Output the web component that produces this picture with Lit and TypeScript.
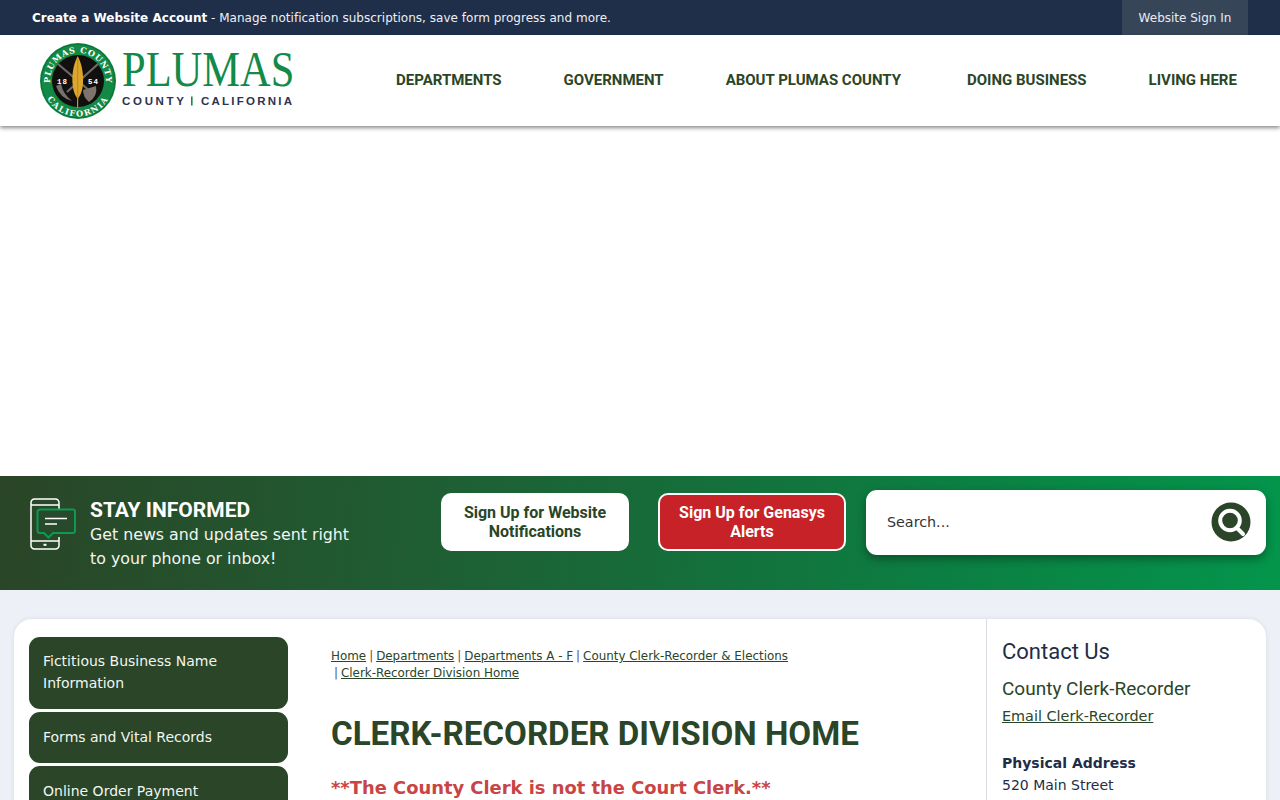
import { LitElement, html, css, svg } from "lit";
import { customElement } from "lit/decorators.js";

const seal = svg`<svg class="seal" viewBox="0 0 78 78" width="78" height="78" aria-label="Plumas County seal">
  <defs>
    <path id="arcTop" d="M39 67 A28 28 0 1 1 39.01 67"/>
    <path id="arcBot" d="M39 3.500 A35.500 35.500 0 1 0 39.01 3.500"/>
  </defs>
  <circle cx="39" cy="39" r="38" fill="#128a45"/>
  <circle cx="39" cy="39" r="36.800" fill="none" stroke="#0a5f30" stroke-width=".6"/>
  <circle cx="39" cy="39" r="26" fill="#12100f"/>
  <text class="sealt"><textPath href="#arcTop" startOffset="50%" text-anchor="middle">PLUMAS COUNTY</textPath></text>
  <text class="sealt wide"><textPath href="#arcBot" startOffset="50%" text-anchor="middle">CALIFORNIA</textPath></text>
  <path d="M19 22 L52 50 M59 22 L28 50" stroke="#6d6a66" stroke-width="2.200"/>
  <path d="M17 44 Q21 56 33 59 Q24 52 22 42 Z" fill="#77716b"/>
  <path d="M44 48 L57 44 Q59 54 50 60 Q44 55 44 48 Z" fill="#7f746c"/>
  <path d="M38.600 66 L38.600 56" stroke="#b9973c" stroke-width="1.200"/>
  <path d="M38.700 14 C43 22 45 33 43.800 44 C43 50 41 54 38.700 57 C36.500 54 34.500 50 33.800 44 C32.500 33 34.500 22 38.700 14 Z" fill="#dca52c"/>
  <path d="M38.700 17 L38.700 57" stroke="#a97c1f" stroke-width=".7"/>
  <text x="18" y="41.500" class="yr">18</text>
  <text x="49" y="41.500" class="yr">54</text>
</svg>`;

const wordmark = svg`<svg class="word" viewBox="0 0 210 58" width="210" height="58">
  <text x="0" y="36" class="pl" transform="scale(.85 1)">PLUMAS</text>
  <text x="0" y="55" class="cc" textLength="62" lengthAdjust="spacing">COUNTY</text>
  <rect x="69" y="46.500" width="1.600" height="9" fill="#128a45"/>
  <text x="79" y="55" class="cc" textLength="91" lengthAdjust="spacing">CALIFORNIA</text>
</svg>`;

const phone = svg`<svg viewBox="0 0 46 52" width="46" height="52" fill="none">
  <path d="M23 1H4.500A3.500 3.500 0 0 0 1 4.500V47.500A3.500 3.500 0 0 0 4.500 51H25.500A3.500 3.500 0 0 0 29 47.500V39M1 7H29V11M1 43H29M29 7V4.500A3.500 3.500 0 0 0 25.500 1H22" stroke="#fff" stroke-width="1.500"/>
  <rect x="13.500" y="45.800" width="3" height="2" fill="#fff"/>
  <path d="M10 11.500H43A2 2 0 0 1 45 13.500V33A2 2 0 0 1 43 35H23L18.500 39.500L14 35H10A2.500 2.500 0 0 1 7.500 32.500V14A2.500 2.500 0 0 1 10 11.500Z" fill="#27492c" stroke="#0d9a4e" stroke-width="2"/>
  <path d="M15 20.500H37M15 26H27" stroke="#fff" stroke-width="1.700"/>
</svg>`;

const glass = svg`<svg viewBox="0 0 40 40" width="40" height="40">
  <circle cx="20" cy="20" r="19.500" fill="#2a4527"/>
  <circle cx="19" cy="18.500" r="9.800" fill="none" stroke="#fff" stroke-width="4"/>
  <path d="M25.500 25.500L32 32" stroke="#fff" stroke-width="4" stroke-linecap="round"/>
</svg>`;

@customElement("app-root")
export class AppRoot extends LitElement {
  static styles = css`
    :host { display: block; height: 800px; overflow: hidden; background: #eef0f7; font-family: "DejaVu Sans", sans-serif; color: #1f2d45; }
    a { color: inherit; }

    .top { height: 35px; background: #1f2f4a; color: #fff; display: flex; justify-content: space-between; padding: 0 32px; font-size: 12px; align-items: stretch; }
    .top p { margin: 0; align-self: center; color: #eef0f4; letter-spacing: .02px; }
    .top b { color: #fff; }
    .signin { width: 126px; background: #374559; display: flex; align-items: center; justify-content: center; color: #e8ecf2; }

    .head { position: relative; z-index: 2; height: 91px; background: #fff; box-shadow: 0 2px 4px rgba(0,0,0,.45); display: flex; align-items: stretch; }
    .logo { display: flex; padding: 7px 0 0 39px; width: 357px; box-sizing: border-box; gap: 5px; }
    .seal { flex: none; }
    .sealt { font: bold 8.200px "DejaVu Serif", serif; fill: #fff; letter-spacing: .7px; }
    .sealt.wide { letter-spacing: 1.400px; }
    .yr { font: bold 7.500px "Liberation Mono", monospace; fill: #fff; letter-spacing: 1px; }
    .word { margin-top: 8px; flex: none; }
    .pl { font: 50px "Liberation Serif", serif; fill: #128a4a; }
    .cc { font: bold 11.500px "Liberation Sans", sans-serif; fill: #2b3450; }
    nav { display: flex; align-items: center; font: 700 15px Roboto, sans-serif; color: #2a4527; padding-bottom: 1px; }
    nav span { white-space: nowrap; }
    nav .n1 { margin-left: 39px; }
    nav .n2 { margin-left: 62px; }
    nav .n3 { margin-left: 62px; }
    nav .n4 { margin-left: 66px; }
    nav .n5 { margin-left: 62px; }

    .hero { height: 350px; background: #fff; }

    .band { height: 114px; background: linear-gradient(95deg, #2a4527 0%, #1e5f33 35%, #0b8042 75%, #04954b 100%); display: flex; align-items: flex-start; color: #fff; }
    .inform { width: 441px; box-sizing: border-box; padding: 22px 0 0 30px; display: flex; gap: 14px; flex: none; }
    .inform h2 { margin: 0; font: 700 21px/24px Roboto, sans-serif; padding-bottom: 1px; }
    .inform p { margin: 0; font-size: 15.800px; line-height: 24px; color: #f2f5f2; }
    .cta { flex: none; width: 188px; height: 58px; box-sizing: border-box; margin-top: 17px; border-radius: 10px; background: #fff; color: #2a4527; font: 700 16px/19px Roboto, sans-serif; display: flex; align-items: center; justify-content: center; text-align: center; padding: 0 20px; }
    .cta.red { margin-left: 29px; background: #c62227; color: #fff; border: 2px solid #fff; padding: 0 15px; }
    .search { flex: none; width: 400px; height: 65px; margin: 14px 0 0 20px; border-radius: 11px; background: #fff; box-shadow: 0 4px 10px rgba(0,0,0,.35); display: flex; align-items: center; justify-content: space-between; padding: 0 15px 2px 21px; box-sizing: border-box; color: #333; font-size: 14.300px; }
    .search svg { display: block; }

    .card { margin: 29px 14px 0; background: #fff; border-radius: 18px; box-shadow: 0 0 5px rgba(40,50,90,.1); display: flex; height: 300px; }
    .side { width: 274px; flex: none; box-sizing: border-box; padding: 18px 0 0 15px; display: flex; flex-direction: column; gap: 3px; }
    .side a { display: block; width: 259px; box-sizing: border-box; background: #2a4527; color: #f2f5f2; border-radius: 11px; padding: 14px 14px 15px; font-size: 14px; line-height: 22px; text-decoration: none; }
    .side a.first { padding-top: 13px; }
    main { width: 699px; flex: none; box-sizing: border-box; border-right: 1px solid #d9dce3; padding: 29px 0 0 43px; }
    .crumbs { font-size: 11.900px; line-height: 17px; color: #2a4527; width: 480px; }
    .crumbs i { font-style: normal; color: #555; margin: 0 3px; }
    h1 { margin: 32px 0 0; font: 700 33.150px/40px Roboto, sans-serif; color: #2a4527; }
    .warn { margin: 22px 0 0; font-size: 17.900px; font-weight: 700; line-height: 24px; color: #c94444; white-space: nowrap; }
    aside { flex: 1; padding: 18px 0 0 15px; font-size: 14px; line-height: 22px; }
    aside h2 { margin: 0; font: 400 22px/30px Roboto, sans-serif; color: #1f2d45; }
    aside h3 { margin: 8px 0 0; font: 400 19px/28px Roboto, sans-serif; color: #2a4527; }
    aside .mail { display: block; margin-top: 2px; color: #2a4527; font-size: 14.400px; }
    aside p { margin: 25px 0 0; }
  `;

  render() {
    return html`
      <div class="top">
        <p><b>Create a Website Account</b> - Manage notification subscriptions, save form progress and more.</p>
        <a class="signin">Website Sign In</a>
      </div>
      <header class="head">
        <div class="logo">${seal}${wordmark}</div>
        <nav>
          <span class="n1">DEPARTMENTS</span><span class="n2">GOVERNMENT</span><span class="n3">ABOUT PLUMAS COUNTY</span><span class="n4">DOING BUSINESS</span><span class="n5">LIVING HERE</span>
        </nav>
      </header>
      <div class="hero"></div>
      <section class="band">
        <div class="inform">
          ${phone}
          <div>
            <h2>STAY INFORMED</h2>
            <p>Get news and updates sent right<br />to your phone or inbox!</p>
          </div>
        </div>
        <a class="cta">Sign Up for Website Notifications</a>
        <a class="cta red">Sign Up for Genasys Alerts</a>
        <div class="search"><span>Search...</span>${glass}</div>
      </section>
      <section class="card">
        <div class="side">
          <a class="first">Fictitious Business Name Information</a>
          <a>Forms and Vital Records</a>
          <a>Online Order Payment</a>
        </div>
        <main>
          <div class="crumbs">
            <a href="#">Home</a><i>|</i><a href="#">Departments</a><i>|</i><a href="#">Departments A - F</a><i>|</i><a href="#">County Clerk-Recorder &amp; Elections</a>
            <br /><i>|</i><a href="#">Clerk-Recorder Division Home</a>
          </div>
          <h1>CLERK-RECORDER DIVISION HOME</h1>
          <p class="warn">**The County Clerk is not the Court Clerk.**</p>
        </main>
        <aside>
          <h2>Contact Us</h2>
          <h3>County Clerk-Recorder</h3>
          <a class="mail" href="#">Email Clerk-Recorder</a>
          <p><b>Physical Address</b><br />520 Main Street</p>
        </aside>
      </section>
    `;
  }
}
